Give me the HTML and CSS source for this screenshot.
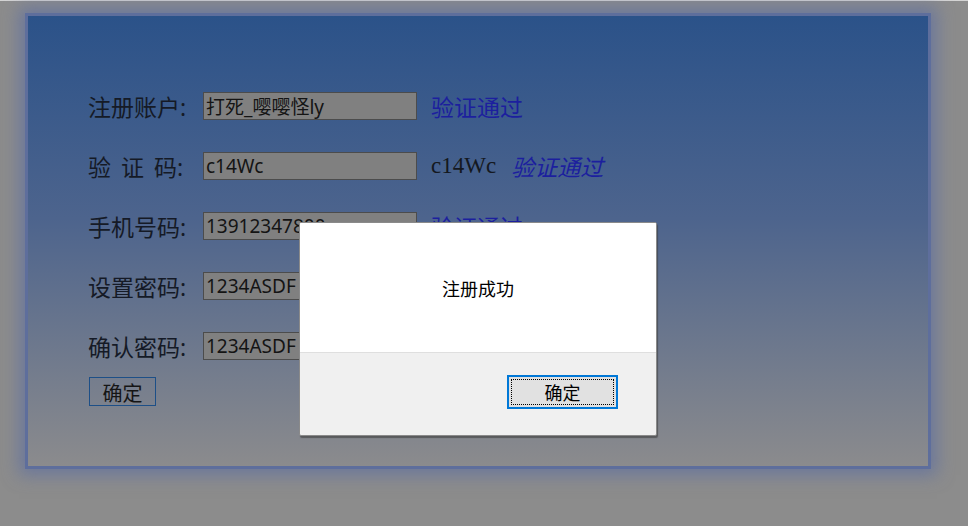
FILE: index.html
```html
<!DOCTYPE html>
<html lang="zh">
<head>
<meta charset="utf-8">
<title>注册</title>
<link rel="stylesheet" href="styles.css">
</head>
<body>
<div class="topline"></div>
<div class="card">
  <form class="form">
    <div class="row">
      <label class="label">注册账户:</label>
      <input class="field" type="text" value="打死_嘤嘤怪ly">
      <span class="ok">验证通过</span>
    </div>
    <div class="row">
      <label class="label">验 证 码:</label>
      <input class="field" type="text" value="c14Wc">
      <span class="code">c14Wc</span>
      <span class="ok italic">验证通过</span>
    </div>
    <div class="row">
      <label class="label">手机号码:</label>
      <input class="field" type="text" value="13912347800">
      <span class="ok">验证通过</span>
    </div>
    <div class="row">
      <label class="label">设置密码:</label>
      <input class="field" type="text" value="1234ASDF">
      <span class="ok">验证通过</span>
    </div>
    <div class="row">
      <label class="label">确认密码:</label>
      <input class="field" type="text" value="1234ASDF">
      <span class="ok">验证通过</span>
    </div>
    <button class="submit" type="button">确定</button>
  </form>
</div>
<div class="dialog">
  <div class="dialog-body">注册成功</div>
  <div class="dialog-foot">
    <button class="dialog-btn" type="button"><span class="focus">确定</span></button>
  </div>
</div>
</body>
</html>
```
FILE: styles.css
```css
html, body {
  margin: 0;
  padding: 0;
}
body {
  background: #8c8c8c;
  width: 968px;
  height: 526px;
  overflow: hidden;
  position: relative;
  font-family: "Noto Sans", "Noto Sans CJK SC", sans-serif;
}
.topline {
  height: 1px;
  background: #d4d4d4;
}
.card {
  margin: 12px 0 0 25px;
  width: 900px;
  height: 450px;
  border: 3px solid #5e6e9c;
  background: linear-gradient(to bottom, #2b5289 0%, #4d648d 45%, #8b8b8d 100%);
  box-shadow: 0 0 16px 6px rgba(96, 112, 160, 0.75);
}
.form {
  padding: 60px 0 0 60px;
  display: flex;
  flex-direction: column;
  align-items: flex-start;
}
.row {
  height: 60px;
  display: flex;
  align-items: center;
}
.label {
  width: 115px;
  font-size: 23px;
  color: #151a26;
  white-space: pre;
  word-spacing: 4px;
}
.field {
  box-sizing: border-box;
  width: 214px;
  height: 28px;
  margin: 0;
  padding: 0 2px;
  border: 1px solid #4c4c4c;
  background: #808080;
  color: #141414;
  font-family: "Noto Sans", "Noto Sans CJK SC", sans-serif;
  font-size: 19px;
  outline: none;
}
.ok {
  margin-left: 14px;
  font-size: 23px;
  color: #1c1f9e;
}
.ok.italic {
  font-style: italic;
  margin-left: 15px;
}
.code {
  margin-left: 14px;
  font-family: "Liberation Serif", serif;
  font-size: 23px;
  color: #141820;
}
.submit {
  margin: 1px 0 0 1px;
  box-sizing: border-box;
  width: 67px;
  height: 29px;
  padding: 0;
  border: 1px solid #1d4f87;
  background: transparent;
  font-family: "Noto Sans", "Noto Sans CJK SC", sans-serif;
  font-size: 20px;
  color: #151515;
}
.dialog {
  position: absolute;
  left: 299px;
  top: 222px;
  width: 356px;
  height: 212px;
  border: 1px solid #8a8a8a;
  border-radius: 2px;
  box-shadow: 1px 2px 1px rgba(60, 60, 60, 0.6);
  background: #f0f0f0;
  display: flex;
  flex-direction: column;
  overflow: hidden;
}
.dialog-body {
  height: 129px;
  background: #ffffff;
  border-bottom: 1px solid #dfdfdf;
  display: flex;
  align-items: center;
  justify-content: center;
  font-size: 18px;
  color: #000;
}
.dialog-foot {
  flex: 1;
  display: flex;
  justify-content: flex-end;
  align-items: flex-start;
  padding: 22px 38px 0 0;
}
.dialog-btn {
  box-sizing: border-box;
  width: 111px;
  height: 34px;
  padding: 2px;
  margin: 0;
  border: 2px solid #0078d7;
  background: #e1e1e1;
  font-family: "Noto Sans", "Noto Sans CJK SC", sans-serif;
  font-size: 18px;
  color: #000;
}
.focus {
  display: flex;
  align-items: center;
  justify-content: center;
  width: 100%;
  height: 100%;
  box-sizing: border-box;
  border: 1px dotted #000;
}
```
